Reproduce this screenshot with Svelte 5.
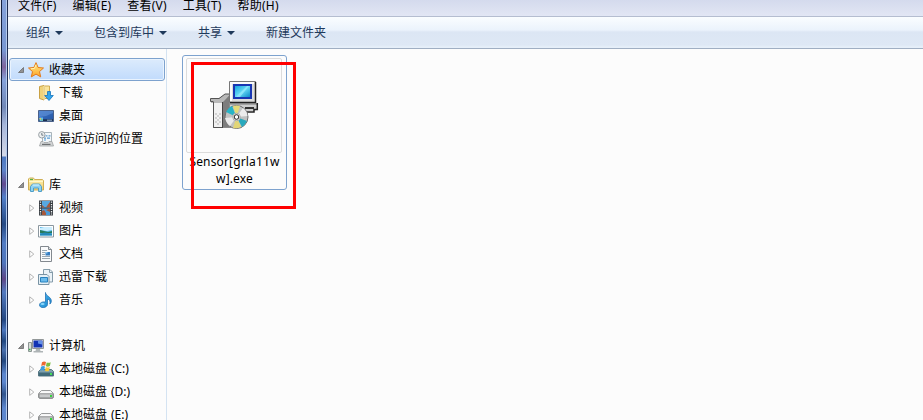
<script lang="ts">
  const menus = ['文件(F)', '编辑(E)', '查看(V)', '工具(T)', '帮助(H)'];

  const commands = [
    { label: '组织', arrow: true },
    { label: '包含到库中', arrow: true },
    { label: '共享', arrow: true },
    { label: '新建文件夹', arrow: false }
  ];

  const groups = [
    {
      label: '收藏夹', icon: 'star', selected: true, expandable: false,
      items: [
        { label: '下载', icon: 'download' },
        { label: '桌面', icon: 'desktop' },
        { label: '最近访问的位置', icon: 'recent' }
      ]
    },
    {
      label: '库', icon: 'library', selected: false, expandable: true,
      items: [
        { label: '视频', icon: 'video' },
        { label: '图片', icon: 'picture' },
        { label: '文档', icon: 'document' },
        { label: '迅雷下载', icon: 'files' },
        { label: '音乐', icon: 'music' }
      ]
    },
    {
      label: '计算机', icon: 'computer', selected: false, expandable: true,
      items: [
        { label: '本地磁盘 (C:)', icon: 'system' },
        { label: '本地磁盘 (D:)', icon: 'disk' },
        { label: '本地磁盘 (E:)', icon: 'disk' }
      ]
    }
  ];
</script>

{#snippet drive()}
  <path d="M3.5 6.5h9l3 3v4l-1 1h-13l-1-1v-4z" fill="#ececec" stroke="#9a9c9d" />
  <path d="M1 9.8h14v4H1z" fill="#c9cbcc" stroke="#7d8082" stroke-width=".8" />
  <path d="M3.5 7.2h9l1.5 1.8H2z" fill="#fafafa" />
  <path d="M12 11h2v2h-2z" fill="#35d53c" />
{/snippet}

{#snippet icon(name: string)}
  <svg class="icon" width="16" height="16" viewBox="0 0 16 16">
    {#if name === 'star'}
      <path d="M8 .6l2.1 4.9 5.4.5-4 3.6 1.2 5.3L8 12.1l-4.7 2.8 1.2-5.3-4-3.6 5.4-.5z" fill="url(#gold)" stroke="#e27a1c" stroke-linejoin="round" />
      <path d="M8 2.8L6.5 6.4l-3.6.4" fill="none" stroke="#fff3b4" />
    {:else if name === 'download'}
      <path d="M1.5 1.5L6 .5V15l-4.5-1.5z" fill="#f0d278" stroke="#c9a144" />
      <path d="M6.5 1h5v12.5h-5z" fill="#fbe59a" stroke="#cfab52" />
      <path d="M6 1v13.5" stroke="#fff6ca" />
      <path d="M9.5 6.5h3v4h2.8L11 15.5 6.7 10.5h2.8z" fill="#31a5ed" stroke="#1474bd" stroke-width=".8" />
    {:else if name === 'desktop'}
      <path d="M.5 2.5h15v11H.5z" fill="url(#screen)" stroke="#4a618a" />
      <path d="M1 3h14v2L8 8 1 9z" fill="#6c9ee0" opacity=".5" />
      <path d="M1 11.3h14V13H1z" fill="#19304f" />
      <path d="M1.5 9.5h3.5V13H1.5z" fill="#64bdf0" />
      <path d="M1.5 10H3v1.5H1.5z" fill="#f1cb4d" />
      <path d="M3.2 11.3h1.3v1.2H3.2z" fill="#7cc45a" />
      <path d="M9 12.2h5" stroke="#9ab2d2" />
    {:else if name === 'recent'}
      <path d="M4.5 1.5h9v11h-9z" fill="#f3f7fa" stroke="#a9b4bb" />
      <path d="M7.5 4.8h2m1 0h2M6 7.2h2m1 0h3M6 9h2" stroke="#5b9bd0" stroke-width="1.2" />
      <circle cx="3.8" cy="3.8" r="3.2" fill="#eef0f1" stroke="#9aa1a5" />
      <path d="M3.8 2v2.2h1.6" fill="none" stroke="#56656e" stroke-width=".8" />
      <path d="M3 10.5h2l1 1h4l1-1h3l1.5 4.5h-14z" fill="#d3d5d6" stroke="#a0a3a5" stroke-width=".8" />
      <path d="M4 12.8h8.5v1.2H4z" fill="#6e7274" />
    {:else if name === 'library'}
      <path d="M.5 13V2l1-1h4l1 1.5h8l1 1V13z" fill="url(#folder)" stroke="#cfae54" />
      <path d="M2 2.5h3" stroke="#59ad45" stroke-width="1.3" />
      <path d="M1 4.5h14" stroke="#fff7ca" />
      <path d="M2.5 14.5v-5l2-2.5h7l2 2.5v5h-3V11h-5v3.5z" fill="#8fd3f3" stroke="#519fc7" />
      <path d="M4.7 8h6.5" stroke="#ddf6ff" />
    {:else if name === 'video'}
      <path d="M1 .5h14v15H1z" fill="#363b40" />
      <path d="M4 1h8v6.5H4z" fill="#58a8e2" />
      <path d="M4 8.5h8V15H4z" fill="#4a9ad8" />
      <path d="M4 1v4l3 2.5H4zM12 2v5.5H8l2-3zM4 15v-4l2-1 2 3v2z" fill="#a6583c" />
      <path d="M8 10l4 2v-3.5z" fill="#a6583c" />
      <path d="M2.5 1.5v13M13.5 1.5v13" stroke="#edf1f2" stroke-width="1.3" stroke-dasharray="1.3 1.1" />
    {:else if name === 'picture'}
      <path d="M.5 2.5h15v11.5H.5z" fill="#fff" stroke="#8b979f" />
      <path d="M2 4h12v8.5H2z" fill="#5bb9e9" />
      <path d="M2 5l4-1h8v3l-5 1-7-1z" fill="#cceeff" />
      <path d="M2 7l4 1 4 1 4-1v2H2z" fill="#287a59" />
      <path d="M2 10.5l5-1 7 1v2H2z" fill="#2488b8" />
    {:else if name === 'document'}
      <path d="M2.5.5h8l3 3v12h-11z" fill="#fafbfc" stroke="#83898f" />
      <path d="M10.5.5v3h3" fill="#dce1e5" stroke="#83898f" />
      <path d="M4 4.5h5M4 6.5h3M4 8.5h3M4 10.5h8M4 12.5h8" stroke="#9aa8b2" />
      <path d="M7.5 6h4.5v3.5H7.5z" fill="#367dc1" />
      <path d="M7.5 6h2v1.5h-2z" fill="#8bc7ef" />
    {:else if name === 'files'}
      <path d="M5.5.5h6.5l2.5 2.5v10h-9z" fill="#eaf2f7" stroke="#849ba9" />
      <path d="M11.5.5V3.5h3" fill="none" stroke="#849ba9" />
      <path d="M.5 5.5h8.5l2 2v8H.5z" fill="#e5f0f6" stroke="#7993a4" />
      <path d="M2.5 8.5h7v4.5h-7z" fill="#69bbed" stroke="#2981bd" />
    {:else if name === 'music'}
      <path d="M7.5.5c.2 3.7 6.2 4.2 5.8 9-.1 1.2-.7 2-1.5 2.6.9-2.9-.3-4.5-2.3-5.1v5.4c0 1.8-2.2 3.2-4.4 3.2-2 0-3.6-1-3.6-2.6 0-2.1 2.6-3.5 6-3z" fill="url(#note)" stroke="#2474b5" stroke-width=".8" />
      <ellipse cx="4.6" cy="12.1" rx="2" ry="1" fill="#8ed8fb" />
    {:else if name === 'computer'}
      <path d="M.5 4.5h3v9h-3z" fill="#d9ddd9" stroke="#8c9694" />
      <path d="M1 11.5h1.5" stroke="#36b64d" stroke-width="1.5" />
      <path d="M4.5 1.5h11v9h-11z" fill="#e3e5e5" stroke="#929798" />
      <path d="M5.5 2.5h9v7h-9z" fill="#1233b4" />
      <path d="M10 3h4v3.5l-4-1z" fill="#638fe6" />
      <path d="M8 11h4l.5 2H15v1.5H5.5V13h2z" fill="#aeb4b6" />
    {:else if name === 'system'}
      <path d="M2.5 8.5h11l2 2v4.5H.5v-4.5z" fill="#7fa0ad" stroke="#557580" />
      <path d="M1 11.5h14V15H1z" fill="#416b7a" />
      <path d="M12 12h2v2h-2z" fill="#44dd55" />
      <path d="M4 1.2Q6-.2 8 1L7.2 4.8Q5.5 3.8 3.2 5z" fill="#ee6831" />
      <path d="M8.7 1.4q2 1 4-.2l-.8 3.9q-2 1-4 .1z" fill="#7cbd41" />
      <path d="M3 5.7q2-1.2 4-.2l-.8 3.9Q4.4 8.4 2.2 9.5z" fill="#3d9ddf" />
      <path d="M7.8 6q2 1 4 0L11 9.8q-2 1-4 0z" fill="#fac833" />
    {:else}
      {@render drive()}
    {/if}
  </svg>
{/snippet}

<svg class="defs" width="0" height="0">
  <defs>
    <linearGradient id="gold" x2="0" y2="1"><stop stop-color="#ffec8a" /><stop offset="1" stop-color="#ffa526" /></linearGradient>
    <linearGradient id="screen" x2="1" y2="1"><stop stop-color="#3f74c6" /><stop offset="1" stop-color="#2456a5" /></linearGradient>
    <linearGradient id="folder" x2="0" y2="1"><stop stop-color="#fff1b0" /><stop offset="1" stop-color="#efcf73" /></linearGradient>
    <linearGradient id="note" x2="1" y2="1"><stop stop-color="#53bcf2" /><stop offset="1" stop-color="#1583cb" /></linearGradient>
    <linearGradient id="monitor" x2="1" y2="1"><stop stop-color="#16a5e0" /><stop offset=".5" stop-color="#66d9f5" /><stop offset="1" stop-color="#0c8acb" /></linearGradient>
  </defs>
</svg>

<div class="window">
  <div class="frame"></div>
  <div class="explorer">
    <div class="menubar">
      {#each menus as menu}
        <span>{menu}</span>
      {/each}
    </div>

    <div class="toolbar">
      {#each commands as command}
        <button>{command.label}{#if command.arrow}<i></i>{/if}</button>
      {/each}
    </div>

    <div class="body">
      <nav>
        {#each groups as group}
          <section>
            <div class="row" class:selected={group.selected}>
              <svg class="open" width="6" height="6" viewBox="0 0 6 6"><path d="M5.5.5v5h-5z" fill="#929292" stroke="#6b6b6b" stroke-width=".8" /></svg>
              {@render icon(group.icon)}
              <span>{group.label}</span>
            </div>
            {#each group.items as item}
              <div class="row child">
                <svg class="closed" width="6" height="8" viewBox="0 0 6 8">
                  {#if group.expandable}<path d="M.7.8v6.6L4.8 4.1z" fill="#fff" stroke="#b4b4b4" />{/if}
                </svg>
                {@render icon(item.icon)}
                <span>{item.label}</span>
              </div>
            {/each}
          </section>
        {/each}
      </nav>

      <main>
        <div class="file">
          <div class="thumb">
            <svg width="49" height="50" viewBox="0 0 49 50">
              <!-- box -->
              <path d="M1 18h7l7-5h6v34H3V22H1z" fill="#8b8b8b" />
              <path d="M1 18h8l6-5h5l-5 7v2H1z" fill="#b9b9b9" />
              <path d="M13 21l6-6v31h-7z" fill="#7d7d7d" />
              <path d="M4 22h8v24H4z" fill="#f2f2f2" />
              <path d="M5 32h2v2H5zm4 0h2v2H9zm-2 2h2v2H7zm-2 2h2v2H5zm4 0h2v2H9zm-2 2h2v2H7zm-2 2h2v2H5zm4 0h2v2H9zm-2 2h2v2H7z" fill="#d2d2d2" />
              <path d="M.5 17.5H9l6-4.5h5M.5 17.5v3h3M3.5 21v25.5H12" fill="none" stroke="#555" />
              <path d="M12.5 21v26" stroke="#444" />
              <!-- base and monitor -->
              <path d="M20 22h27v7l-3 1H20z" fill="#cfcfcf" />
              <path d="M20 23h27" stroke="#777" />
              <path d="M47.3 22v6.5H44V31h-9" fill="none" stroke="#222" stroke-width="1.5" />
              <path d="M35 27h9" stroke="#333" stroke-width="2" />
              <path d="M19.5.5h26v21h-26z" fill="#dcdcdc" stroke="#777" />
              <path d="M45.5 1v20.5H20" fill="none" stroke="#222" stroke-width="1.5" />
              <path d="M20 1h24v2H22v17h-2z" fill="#fafafa" />
              <path d="M23 3h19v15H23z" fill="#1836b3" />
              <path d="M25 5h15v11H25z" fill="url(#monitor)" />
              <path d="M26 16L37 5h2L30 16z" fill="#9cebff" opacity=".7" />
              <!-- disc -->
              <circle cx="26.5" cy="36" r="11.5" fill="#c0c2c2" stroke="#6f6f6f" />
              <path d="M26.5 36L16 31q3-5 6-6z" fill="#28b4c6" />
              <path d="M26.5 36L23 25q4-1 7 0z" fill="#e6dc78" />
              <path d="M26.5 36L33 27q4 3 4.5 8z" fill="#ececec" />
              <path d="M26.5 36L37 40q-2 4-5 6z" fill="#28a9bd" />
              <path d="M26.5 36L31 46q-4 2-8 1z" fill="#e2d676" />
              <path d="M26.5 36L20 45q-4-3-5-8z" fill="#eaeaea" />
              <circle cx="26.5" cy="36" r="3.8" fill="#eee" stroke="#aaa" />
              <circle cx="26.5" cy="36" r="2.3" fill="#fff" stroke="#222" />
            </svg>
          </div>
          <p>Sensor[grla11w<br />w].exe</p>
          <div class="highlight"></div>
        </div>
      </main>
    </div>
  </div>
</div>

<style>
  :global(body) {
    overflow: hidden;
    background: #fcfcfc;
  }

  .defs { position: absolute; }

  .window {
    display: flex;
    height: 420px;
    font: 12px/16px "Noto Sans", "Noto Sans CJK SC", sans-serif;
    color: #000;
  }

  .frame {
    box-sizing: border-box;
    width: 8px;
    flex: none;
    border-right: 1px solid #1e2b50;
    background:
      linear-gradient(90deg, #e2e4ed 1px, #172340 1px 2px, transparent 2px 6px, #b4cbed 6px),
      linear-gradient(#86a2da 0, #7897d2 50px, #7e659d 67px, #86a2da 80px, #7188b7 107px, #a6b6da 125px, #d5d9e8 156px, #4c78c1 157px, #5d84ca 170px, #624b90 184px, #527fc8 197px, #264a85 224px, #527cc4 243px, #4f75bc 263px, #5d4787 279px, #527ac0 292px, #234681 320px, #4c76bd 330px, #214780 341px, #496fad 350px, #23477e 361px, #5c86ce 374px, #5c86ce 382px, #31558e 394px, #5c86ce 408px);
  }

  .explorer {
    display: flex;
    flex: 1;
    flex-direction: column;
    min-width: 0;
  }

  .menubar {
    display: flex;
    box-sizing: border-box;
    height: 17px;
    gap: 16px;
    padding-left: 10px;
    border-bottom: 1px solid #b5bdd0;
    background: linear-gradient(#d4daed, #e2e6f4);
    line-height: 12px;
    letter-spacing: 0.2px;
  }

  .menubar span { white-space: nowrap; }

  .toolbar {
    display: flex;
    box-sizing: border-box;
    height: 32px;
    gap: 31px;
    padding: 1px 18px 0;
    border-bottom: 1px solid #a0afc3;
    background: linear-gradient(#fafdff 0, #ebf3fc 13px, #dce6f4 15px, #dee8f5 28px, #e6eff9 30px);
  }

  button {
    display: flex;
    align-items: center;
    gap: 5px;
    padding: 0;
    border: 0;
    background: none;
    font: inherit;
    color: #1e395b;
  }

  button i {
    border: 4px solid transparent;
    border-top-color: #1e395b;
    border-bottom: 0;
  }

  .body {
    display: flex;
    flex: 1;
    min-height: 0;
    background: #fcfcfc;
  }

  nav {
    display: flex;
    flex: none;
    flex-direction: column;
    box-sizing: border-box;
    width: 159px;
    gap: 23px;
    padding: 9px 1px 0;
    overflow: hidden;
    border-right: 1px solid #d4e3f2;
  }

  .row {
    display: flex;
    align-items: center;
    box-sizing: border-box;
    height: 23px;
    padding-left: 9px;
    border: 1px solid transparent;
    border-left-width: 0;
    white-space: nowrap;
    word-spacing: 0.8px;
  }

  .row.selected {
    border: 1px solid #7da2ce;
    border-radius: 3px;
    padding-left: 8px;
    background: linear-gradient(#dcebfc, #c1dbfc);
    box-shadow: inset 0 0 0 1px #e9f3fe;
  }

  .row .icon {
    flex: none;
    margin: 0 5px 0 4px;
  }

  .row.child { padding-left: 20px; }

  .row.child .icon { margin-left: 3px; }

  .open, .closed { flex: none; }

  main { padding: 6px 0 0 15px; }

  .file {
    position: relative;
    box-sizing: border-box;
    width: 105px;
    height: 135px;
    padding: 2px 3px;
    border: 1px solid #7da2ce;
    border-radius: 3px;
  }

  .thumb {
    display: flex;
    align-items: center;
    justify-content: center;
    box-sizing: border-box;
    height: 95px;
    margin: 0 1px 0 0;
    border: 1px solid #dcdcdc;
    border-radius: 2px;
  }

  p {
    margin: 0;
    font-family: "Noto Sans", sans-serif;
    font-size: 12px;
    line-height: 17px;
    letter-spacing: 0.15px;
    text-align: center;
    white-space: nowrap;
  }

  .highlight {
    position: absolute;
    top: 6px;
    left: 8px;
    box-sizing: border-box;
    width: 105px;
    height: 147px;
    border: 3px solid #f00;
  }
</style>
